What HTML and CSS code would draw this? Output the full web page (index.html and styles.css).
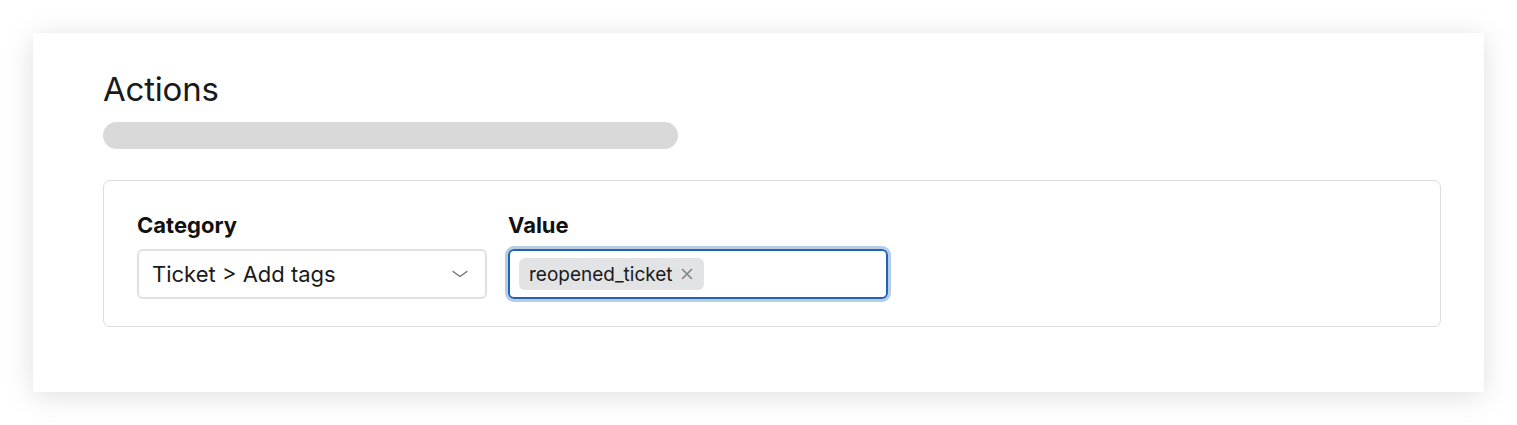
FILE: index.html
```html
<!DOCTYPE html>
<html lang="en">
<head>
  <meta charset="UTF-8" />
  <title>Actions</title>
  <link rel="stylesheet" href="styles.css">
</head>
<body>

<div class="card">
  <h2 class="card-title">Actions</h2>
  <div class="placeholder-bar"></div>

  <div class="action-box">
    <div class="field">
      <label class="field-label">Category</label>
      <div class="select">
        <span>Ticket &gt; Add tags</span>
        <svg class="chevron" width="16" height="8" viewBox="0 0 16 8">
          <path d="M1 1.5 L8 6.5 L15 1.5" fill="none" stroke="#6b7177" stroke-width="1.3" stroke-linecap="round" stroke-linejoin="round"/>
        </svg>
      </div>
    </div>

    <div class="field">
      <label class="field-label">Value</label>
      <div class="tag-input">
        <span class="tag">
          reopened_ticket
          <svg class="tag-remove" width="12" height="12" viewBox="0 0 12 12">
            <path d="M1.5 1.5 L10.5 10.5 M10.5 1.5 L1.5 10.5" fill="none" stroke="#7d8287" stroke-width="1.6" stroke-linecap="round"/>
          </svg>
        </span>
      </div>
    </div>
  </div>
</div>

</body>
</html>
```

FILE: styles.css
```css
html, body {
  margin: 0;
  padding: 0;
  background: #fff;
  font-family: Inter, "Noto Sans", sans-serif;
  color: #111;
}

body {
  padding: 33px;
}

.card {
  width: 1451px;
  height: 359px;
  box-sizing: border-box;
  background: #fff;
  padding: 40px 43px 0 70px;
  box-shadow: 0 4px 28px rgba(0, 0, 0, 0.13);
}

.card-title {
  margin: 0;
  font-size: 33px;
  font-weight: 400;
  line-height: 33px;
  color: #1a1a1a;
  letter-spacing: -0.2px;
}

.placeholder-bar {
  width: 575px;
  height: 27px;
  margin-top: 16px;
  border-radius: 14px;
  background: #d9d9d9;
}

.action-box {
  margin-top: 31px;
  height: 147px;
  box-sizing: border-box;
  border: 1px solid #dcdddf;
  border-radius: 7px;
  padding: 32px 33px 0;
  display: flex;
  gap: 21px;
}

.field {
  display: flex;
  flex-direction: column;
}

.field-label {
  font-size: 22px;
  font-weight: 700;
  line-height: 24px;
  margin-bottom: 12px;
  color: #111;
}

.select {
  width: 350px;
  height: 50px;
  box-sizing: border-box;
  border: 2px solid #dfe1e4;
  border-radius: 6px;
  padding: 0 17px 0 13px;
  display: flex;
  align-items: center;
  justify-content: space-between;
  font-size: 22px;
  color: #1a1a1a;
}

.tag-input {
  width: 380px;
  height: 50px;
  box-sizing: border-box;
  border: 2px solid #1f65b3;
  border-radius: 6px;
  box-shadow: 0 0 0 3px #b7cde6;
  padding: 0 9px;
  display: flex;
  align-items: center;
}

.tag {
  display: flex;
  align-items: center;
  gap: 8px;
  height: 32px;
  padding: 0 11px 0 10px;
  border-radius: 6px;
  background: #e2e3e4;
  font-size: 19px;
  color: #1a1a1a;
}

.tag-remove {
  display: block;
}
```
